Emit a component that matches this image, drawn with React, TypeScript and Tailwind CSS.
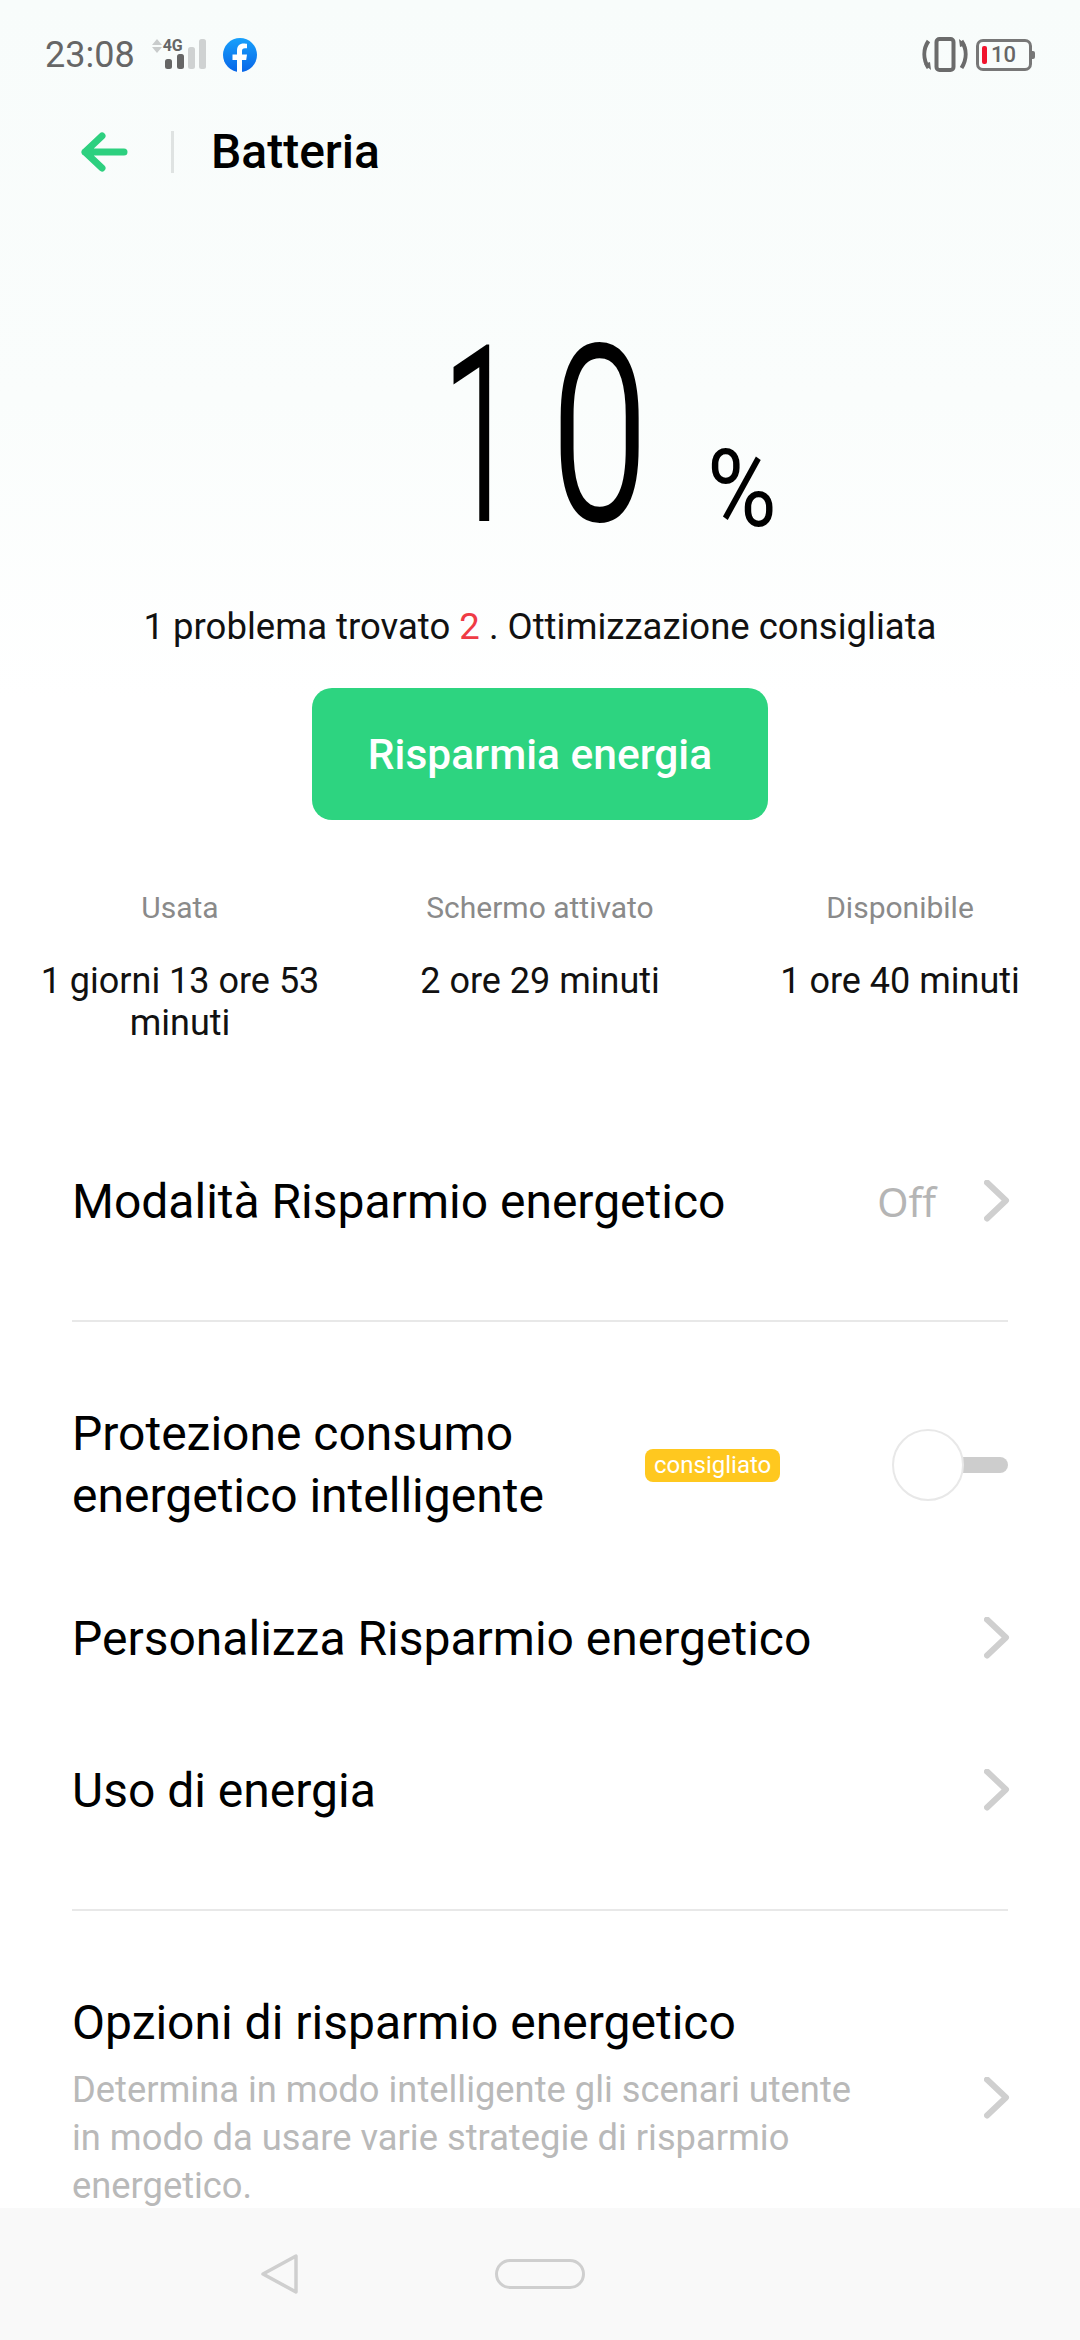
import React from "react";

function SignalIcon() {
  return (
    <div className="relative w-[60px] h-[32px]">
      <svg width="60" height="32" viewBox="0 0 60 32">
        <path d="M3 6l5-6 5 6zM3 8h10l-5 6z" fill="#c9cccc" />
        <rect x="16" y="20" width="7" height="10" rx="2.5" fill="#666" />
        <rect x="28" y="15" width="7" height="15" rx="2.5" fill="#666" />
        <rect x="39" y="8" width="7" height="22" rx="2.5" fill="#cfd2d2" />
        <rect x="50" y="0" width="7" height="30" rx="2.5" fill="#cfd2d2" />
      </svg>
      <span className="absolute left-[14px] top-[-1px] text-[16px] leading-[16px] font-bold text-[#666]">4G</span>
    </div>
  );
}

function FacebookIcon() {
  return (
    <svg width="36" height="36" viewBox="0 0 36 36">
      <defs>
        <linearGradient id="fb" x1="0" y1="0" x2="0" y2="1">
          <stop offset="0" stopColor="#18a0fb" />
          <stop offset="1" stopColor="#0866e8" />
        </linearGradient>
      </defs>
      <circle cx="18" cy="18" r="17" fill="url(#fb)" />
      <path d="M15 35V23h-4.500v-5.500H15v-4c0-4.600 2.600-7 6.700-7 1.600 0 3.300.3 3.300.3v4.500h-2c-2.300 0-3 1.300-3 2.700v3.500h5l-.8 5.500H20v12z" fill="#fff" />
    </svg>
  );
}

function VibrateIcon() {
  return (
    <svg width="46" height="36" viewBox="0 0 46 36" fill="none" stroke="#6b6b6b">
      <rect x="14.500" y="2" width="17" height="31" rx="3" strokeWidth="4" />
      <path d="M6.500 4C1 12 1 22 6.500 31" strokeWidth="4" />
      <path d="M39.500 4C45 12 45 22 39.500 31" strokeWidth="4" />
      <path d="M2 27l7 6-1-8zM44 8l-7-6 1 8z" fill="#6b6b6b" stroke="none" />
    </svg>
  );
}

function BatteryIcon() {
  return (
    <div className="flex items-center">
      <div className="flex items-center w-[56px] h-[32px] rounded-[7px] border-[3px] border-[#777] pl-[3px]">
        <div className="w-[5px] h-[18px] rounded-[2px] bg-[#f0142d]" />
        <span className="ml-[4px] text-[22px] leading-none font-medium text-[#666]">10</span>
      </div>
      <div className="w-[3px] h-[8px] rounded-r-[2px] bg-[#777]" />
    </div>
  );
}

function Chevron() {
  return (
    <svg width="26" height="44" viewBox="0 0 26 44" fill="none" className="shrink-0">
      <path d="M3 2.500l19 18L3 38.500" stroke="#cfcfcf" strokeWidth="6" strokeLinecap="round" strokeLinejoin="round" />
    </svg>
  );
}

function Stat({ label, value }: { label: string; value: string }) {
  return (
    <div className="w-[360px] px-[30px] text-center">
      <div className="text-[30px] leading-[40px] text-[#8a8a8a]">{label}</div>
      <div className="mt-[32px] text-[36px] leading-[42px] text-[#111]">{value}</div>
    </div>
  );
}

function Divider() {
  return <div className="mx-[72px] h-[2px] bg-[#e8e8e8]" />;
}

export default function App() {
  return (
    <div className="flex flex-col w-[1080px] h-[2340px] overflow-hidden bg-[linear-gradient(#f8fcfb_0px,#fafdfc_400px,#ffffff_700px)] font-['Roboto',sans-serif]">
      <main className="flex-1 overflow-hidden">
        {/* status bar */}
        <div className="flex items-center justify-between h-[110px] pl-[45px] pr-[45px]">
          <div className="flex items-center">
            <span className="text-[36px] leading-none text-[#666]">23:08</span>
            <div className="ml-[14px]">
              <SignalIcon />
            </div>
            <div className="ml-[13px]">
              <FacebookIcon />
            </div>
          </div>
          <div className="flex items-center gap-[8px]">
            <VibrateIcon />
            <BatteryIcon />
          </div>
        </div>

        {/* title row */}
        <div className="flex items-center h-[84px]">
          <svg width="48" height="44" viewBox="0 0 48 44" fill="none" className="ml-[80px]">
            <path d="M44 22H5M22 6L5 22l17 16" stroke="#2dd07f" strokeWidth="7" strokeLinecap="round" strokeLinejoin="round" />
          </svg>
          <div className="ml-[43px] w-[3px] h-[42px] bg-[#dfe3e2]" />
          <h1 className="ml-[37px] text-[48px] font-medium leading-none text-black">Batteria</h1>
        </div>

        {/* charge level, digits are narrowed to the condensed look of the system font */}
        <div className="flex items-start h-[266px] mt-[107px] pl-[443px] text-black font-light">
          <span className="w-[109px] pt-[14px] text-[242px] leading-[242px] [-webkit-text-stroke:4px_black] scale-x-[0.55] origin-left">1</span>
          <span className="w-[155px] pt-[14px] text-[242px] leading-[242px] [-webkit-text-stroke:4px_black] scale-x-[0.71] origin-left">0</span>
          <span className="pt-[134px] text-[108px] leading-[108px] font-normal scale-x-[0.88] origin-left">%</span>
        </div>

        <p className="mt-[38px] text-center text-[36.5px] leading-[44px] text-[#111]">
          1 problema trovato <span className="text-[#ef3b45]">2</span> . Ottimizzazione consigliata
        </p>

        <div className="flex justify-center mt-[39px]">
          <button className="w-[456px] h-[132px] rounded-[20px] bg-[#2dd480] pt-[2px] text-[42.5px] font-medium text-white">
            Risparmia energia
          </button>
        </div>

        <div className="flex mt-[68px] h-[190px]">
          <Stat label="Usata" value="1 giorni 13 ore 53 minuti" />
          <Stat label="Schermo attivato" value="2 ore 29 minuti" />
          <Stat label="Disponibile" value="1 ore 40 minuti" />
        </div>

        <div className="flex items-center h-[120px] mt-[64px] pl-[72px] pr-[70px]">
          <span className="flex-1 text-[48px] leading-[60px] text-black">Modalità Risparmio energetico</span>
          <span className="text-[40px] text-[#b5b5b5] font-['Noto_Sans',sans-serif]">Off</span>
          <div className="ml-[48px]">
            <Chevron />
          </div>
        </div>
        <div className="mt-[58px]">
          <Divider />
        </div>

        {/* settings rows */}
        <div className="flex items-center h-[124px] mt-[81px] pl-[72px] pr-[72px]">
          <span className="w-[573px] text-[48px] leading-[62px] text-black">
            Protezione consumo energetico intelligente
          </span>
          <span className="px-[9px] h-[33px] rounded-[8px] bg-[#ffc81f] text-[24px] leading-[33px] text-white">consigliato</span>
          <div className="relative ml-auto w-[116px] h-[72px]">
            <div className="absolute right-0 top-[28px] w-[60px] h-[16px] rounded-full bg-[#cdcdcd]" />
            <div className="absolute left-0 top-0 w-[72px] h-[72px] rounded-full border-[2px] border-[#e8e8e8] bg-white" />
          </div>
        </div>

        <div className="flex items-center justify-between h-[60px] mt-[82px] pl-[72px] pr-[70px]">
          <span className="text-[48px] text-black">Personalizza Risparmio energetico</span>
          <Chevron />
        </div>
        <div className="flex items-center justify-between h-[60px] mt-[92px] pl-[72px] pr-[70px]">
          <span className="text-[48px] text-black">Uso di energia</span>
          <Chevron />
        </div>
        <div className="mt-[88px]">
          <Divider />
        </div>

        <div className="flex items-center justify-between mt-[82px] pl-[72px] pr-[70px]">
          <div className="w-[800px]">
            <div className="text-[48px] leading-[60px] text-black">Opzioni di risparmio energetico</div>
            <div className="mt-[13px] text-[36.3px] leading-[48px] text-[#b9b9b9]">
              Determina in modo intelligente gli scenari utente in modo da usare varie strategie di risparmio energetico.
            </div>
          </div>
          <div className="mb-[6px]">
            <Chevron />
          </div>
        </div>
      </main>

      {/* navigation bar */}
      <nav className="flex items-center shrink-0 h-[132px] bg-[#f9f9f9]">
        <svg width="40" height="42" viewBox="0 0 40 42" fill="none" className="ml-[260px]">
          <path d="M36 3v36L3 21z" stroke="#cfcfcf" strokeWidth="3.500" strokeLinejoin="round" />
        </svg>
        <div className="ml-[195px] w-[90px] h-[30px] rounded-full border-[3px] border-[#cfcfcf]" />
      </nav>
    </div>
  );
}
